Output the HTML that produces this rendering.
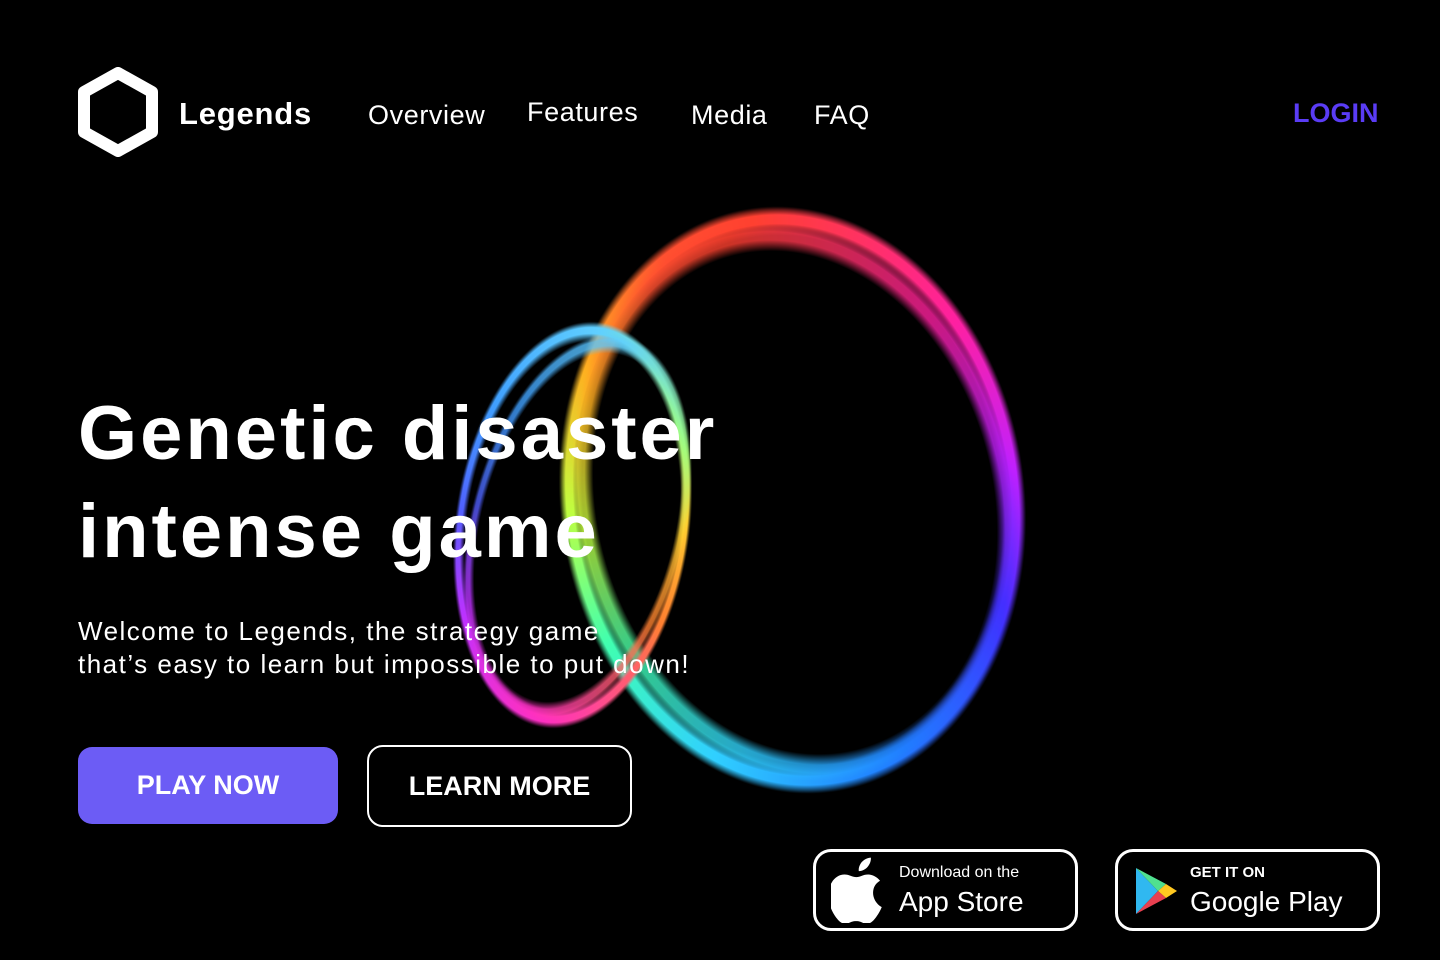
<!DOCTYPE html>
<html><head><meta charset="utf-8"><style>
*{margin:0;padding:0;box-sizing:border-box}
body{width:1440px;height:960px;background:#000;position:relative;overflow:hidden;font-family:"Liberation Sans",Arial,sans-serif;color:#fff}
.ring{position:absolute;border-radius:50%;-webkit-mask:radial-gradient(closest-side,transparent 90%,#000 94%,#000 97%,transparent 100%);mask:radial-gradient(closest-side,transparent 90%,#000 94%,#000 97%,transparent 100%)}
.big{background:conic-gradient(from 0deg,#ff4030 0deg,#ff20a0 50deg,#c020ff 90deg,#4030ff 130deg,#2080ff 170deg,#30d0ff 205deg,#40ffb0 240deg,#c0ff40 275deg,#ffb020 310deg,#ff5030 340deg,#ff4030 360deg)}
.small{background:conic-gradient(from 0deg,#60d0ff 0deg,#a0ff80 40deg,#ffd030 80deg,#ff8030 130deg,#ff30c0 180deg,#c030ff 220deg,#5060ff 270deg,#40a0ff 320deg,#60d0ff 360deg)}
.nav{position:absolute;top:98px;font-size:27px;letter-spacing:.6px}
.btn{position:absolute;display:flex;align-items:center;justify-content:center;font-size:27px;font-weight:bold}
.badge{position:absolute;border:3px solid #fff;border-radius:18px;width:265px;height:82px;top:849px}
</style></head><body>
<div class="ring big" style="left:560px;top:205px;width:465px;height:590px;transform:rotate(-8deg);filter:blur(1.5px)"></div>
<div class="ring big" style="left:575px;top:220px;width:440px;height:565px;transform:rotate(-14deg);opacity:.8;filter:blur(2px)"></div>
<div class="ring small" style="left:455px;top:320px;width:235px;height:410px;transform:rotate(8deg);filter:blur(1.5px)"></div>
<div class="ring small" style="left:470px;top:330px;width:215px;height:395px;transform:rotate(14deg);opacity:.8;filter:blur(2px)"></div>

<svg style="position:absolute;left:78px;top:67px" width="80" height="90" viewBox="0 0 80 90"><polygon points="40,6 74,25 74,65 40,84 6,65 6,25" fill="none" stroke="#fff" stroke-width="12" stroke-linejoin="round"/></svg>
<div style="position:absolute;left:179px;top:96px;font-size:31px;font-weight:bold;letter-spacing:.8px">Legends</div>
<div class="nav" style="left:368px;top:100px">Overview</div>
<div class="nav" style="left:527px;top:97px">Features</div>
<div class="nav" style="left:691px;top:100px">Media</div>
<div class="nav" style="left:814px;top:100px">FAQ</div>
<div style="position:absolute;left:1293px;top:98px;font-size:27px;font-weight:bold;color:#5a3cf5">LOGIN</div>

<div style="position:absolute;left:78px;top:385px;font-size:76px;font-weight:bold;line-height:98px;letter-spacing:3px">Genetic disaster<br>intense game</div>
<div style="position:absolute;left:78px;top:615px;font-size:26px;line-height:33px;letter-spacing:1.5px">Welcome to Legends, the strategy game<br>that’s easy to learn but impossible to put down!</div>

<div class="btn" style="left:78px;top:747px;width:260px;height:77px;background:#6c5cf5;border-radius:14px">PLAY NOW</div>
<div class="btn" style="left:367px;top:745px;width:265px;height:82px;border:2.5px solid #fff;border-radius:16px">LEARN MORE</div>

<div class="badge" style="left:813px">
<svg style="position:absolute;left:15px;top:3px" width="58" height="68" viewBox="0 0 24 28"><path d="M16.5 1c.1 1.5-.5 2.9-1.4 3.9-.9 1-2.3 1.8-3.6 1.7-.2-1.4.5-2.9 1.3-3.8.9-1 2.4-1.8 3.7-1.8zM21 21.5c-.6 1.4-.9 2-1.7 3.2-1.1 1.7-2.6 3.7-4.5 3.7-1.7 0-2.1-1.1-4.4-1.1-2.3 0-2.8 1.1-4.5 1.1-1.9 0-3.3-1.900-4.400-3.500C-1.5 20.400-1.8 14.700.3 11.300c1.200-2.100 3.200-3.300 5.300-3.300 2 0 3.300 1.100 4.900 1.100 1.600 0 2.600-1.100 4.900-1.100 1.800 0 3.600 1 4.900 2.600-4.300 2.400-3.600 8.500.7 10.900z" fill="#fff"/></svg>
<div style="position:absolute;left:83px;top:12px;font-size:16px">Download on the</div>
<div style="position:absolute;left:83px;top:34px;font-size:28px">App Store</div>
</div>
<div class="badge" style="left:1115px">
<svg style="position:absolute;left:15px;top:14px" width="46" height="50" viewBox="0 0 46 50"><polygon points="3,2 25,25 3,48" fill="#30b8f0"/><polygon points="3,2 33,18 25,25" fill="#50e090"/><polygon points="33,18 44,25 33,32 25,25" fill="#ffc820"/><polygon points="3,48 25,25 33,32" fill="#e84050"/></svg>
<div style="position:absolute;left:72px;top:12px;font-size:15px;font-weight:bold">GET IT ON</div>
<div style="position:absolute;left:72px;top:34px;font-size:28px">Google Play</div>
</div>
</body></html>
